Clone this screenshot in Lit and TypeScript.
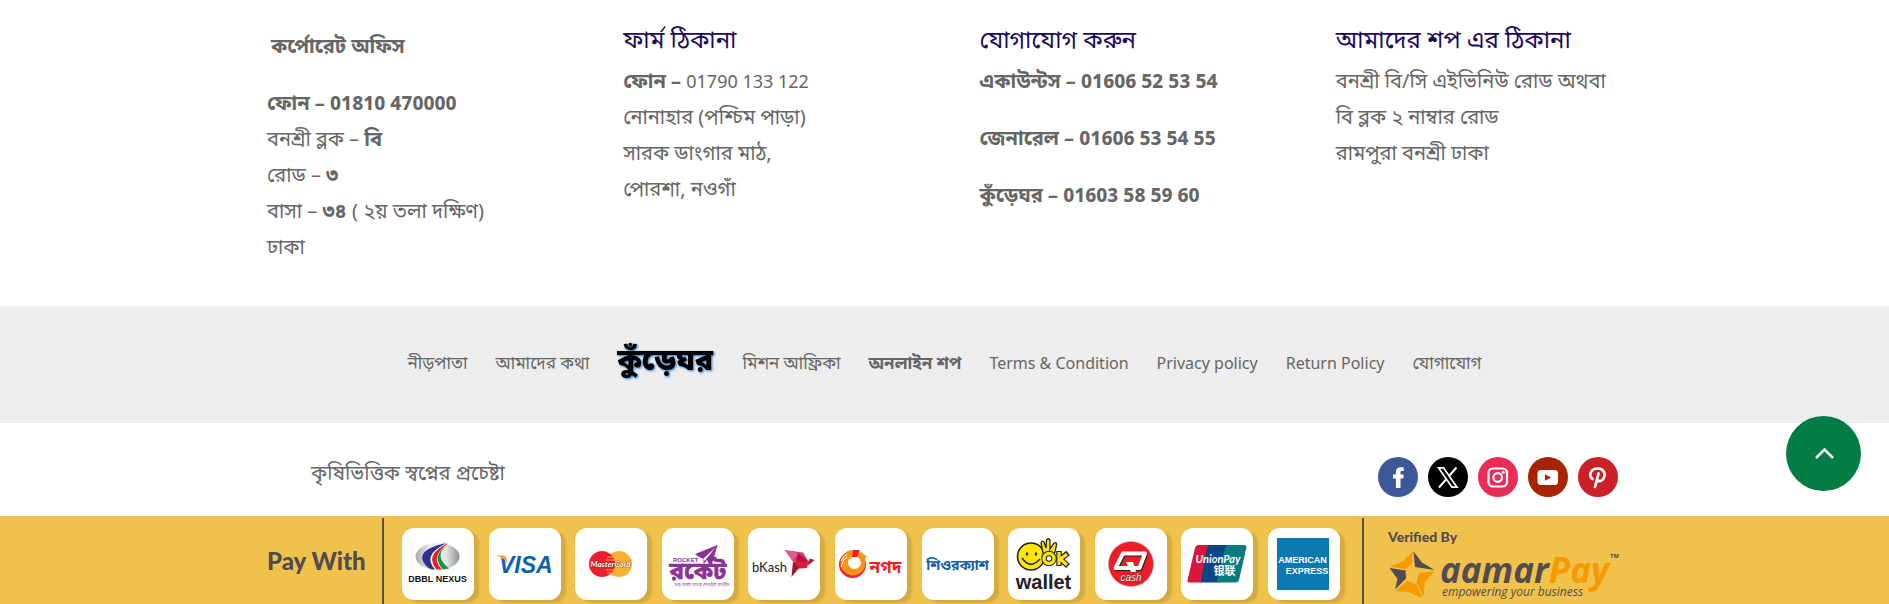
import { LitElement, html, svg, css } from "lit";
import { customElement } from "lit/decorators.js";

const payLogos = [
  {
    name: "DBBL Nexus",
    art: svg`
      <defs>
        <linearGradient id="dbbl" x1="0" x2="1"><stop offset="0" stop-color="#a9a9ac"/><stop offset=".35" stop-color="#f0f0f0"/><stop offset=".7" stop-color="#e4e4e4"/><stop offset="1" stop-color="#8f9092"/></linearGradient>
      </defs>
      <ellipse cx="35.500" cy="28.500" rx="22" ry="13.500" fill="url(#dbbl)"/>
      <path d="M42 15.500Q14 22 22 35Q25 40 30 41.500H34Q20 28 44 15.500Z" fill="#2e3192"/>
      <path d="M44 15.500Q20 27 33 41.500H37Q24 29 45 16Z" fill="#fff"/>
      <path d="M45 15.500Q22 27 34.500 41.500H40Q27 29 46 15.500Z" fill="#ee1c25"/>
      <path d="M45 16.500Q29 28 41 41.500L47 40.500Q31 28 45 16.500Z" fill="#0b9444"/>
      <text x="35.500" y="54" text-anchor="middle" class="ls b" font-size="9" fill="#111">DBBL NEXUS</text>`,
  },
  {
    name: "Visa",
    art: svg`<text x="10" y="45" class="ls b i" font-size="23" fill="#0a5fae">VISA</text>
      <path d="M8 27.500H14Q17 27.500 17.500 30L19 37Q16 30 8 28Z" fill="#f7a03c"/>`,
  },
  {
    name: "MasterCard",
    art: svg`<circle cx="44" cy="36" r="13" fill="#fbb034"/><circle cx="27" cy="36" r="13" fill="#ee1c2e"/>
      <path d="M32 29H39M31 32H40M31 42H39M32 45H37" stroke="#fbb034" stroke-width="1"/>
      <text x="35.500" y="39" text-anchor="middle" class="lato b i" font-size="8" fill="#fff" stroke="#5b1a20" stroke-width=".6" paint-order="stroke">MasterCard</text>`,
  },
  {
    name: "Rocket",
    art: svg`<path d="M33 26L55.600 17L50 36H47L45 32L41.500 36V31L37 29Z" fill="#8a3394"/><path d="M54 19L41.500 30.500L42.500 33Z" fill="#fff"/>
      <text x="11" y="34" class="ls b" font-size="6" fill="#8a3394">ROCKET</text>
      <text x="36" y="51" text-anchor="middle" class="bn b" font-size="24" fill="#8a3394" stroke="#8a3394" stroke-width=".6">রকেট</text>
      <text x="40" y="58" text-anchor="middle" class="bn" font-size="4" fill="#8a3394">ডাচ্-বাংলা ব্যাংক মোবাইল ব্যাংকিং</text>`,
  },
  {
    name: "bKash",
    art: svg`<text x="4" y="44" class="lato" font-size="13" fill="#222">bKash</text>
      <path d="M36.700 22L55 24.500L60.500 33.500L45 33.500Z" fill="#d9386e"/><path d="M36.700 22L50 25L45 33.500Z" fill="#e45c8a"/>
      <path d="M50 25L60.500 33.500L47 38Z" fill="#b8123f"/><path d="M45 33.500L60.500 33.500L59 40L47 41Z" fill="#d81f3c"/>
      <path d="M45 33.500L51 40L43.500 49Z" fill="#a5122c"/><path d="M60 34L62 30.500L66.500 32L62 36L60 37Z" fill="#c01a35"/>`,
  },
  {
    name: "Nagad",
    art: svg`<circle cx="17.500" cy="36.500" r="13.500" fill="#ee2024"/><circle cx="18" cy="35" r="12.500" fill="#f7941d"/>
      <circle cx="19.500" cy="34.500" r="6.500" fill="#fff"/>
      <path d="M6 33Q9 27 14 25M6 39Q7 32 12 29" stroke="#fff" stroke-width="1" fill="none"/>
      <path d="M12 23L18 22L16 31L12 29Z" fill="#f7941d"/><path d="M18 22L25 22L22 29L17 29Z" fill="#ee2024"/><path d="M26 24L32 29L26 33L23 29Z" fill="#f7941d"/>
      <text x="50.500" y="45" text-anchor="middle" class="bn b" font-size="17" fill="#ee2024">নগদ</text>`,
  },
  {
    name: "SureCash",
    art: svg`<text x="35.500" y="42" text-anchor="middle" class="bn b" font-size="14" fill="#1560ab">শিওরক্যাশ</text>`,
  },
  {
    name: "OK Wallet",
    art: svg`<circle cx="23" cy="28.500" r="13.500" fill="#fbe60a" stroke="#222" stroke-width="1.600"/>
      <ellipse cx="19" cy="26" rx="1.200" ry="1.800" fill="#222"/><ellipse cx="28" cy="26" rx="1.200" ry="1.800" fill="#222"/>
      <path d="M14 30Q22 42 32 31" fill="none" stroke="#222" stroke-width="1.400"/>
      <path d="M36 30L33 15Q34 12 36 14L38 20L38.500 12Q40 9.500 42 12L42 21L46 15Q49 14 48.500 17L46 28Z" fill="#fbe60a" stroke="#222" stroke-width="1.300"/>
      <circle cx="41" cy="30.500" r="5" fill="#fff" stroke="#222" stroke-width="5.500"/><circle cx="41" cy="30.500" r="5" fill="none" stroke="#fbe60a" stroke-width="3.500"/>
      <path d="M51 23V38M60 25L52.500 31L60 38" fill="none" stroke="#222" stroke-width="5.500"/><path d="M51 24V37M59 26L52.500 31L59 37" fill="none" stroke="#fbe60a" stroke-width="3.200"/>
      <text x="35.500" y="61" text-anchor="middle" class="ls b" font-size="20" fill="#222">wallet</text>`,
  },
  {
    name: "Q Cash",
    art: svg`<circle cx="36" cy="36" r="22.500" fill="#ee1c25" stroke="#aaa" stroke-width=".6"/>
      <path d="M28 25.500H50L44.500 40H20.500Z" fill="none" stroke="#222" stroke-width="4" stroke-linejoin="round" transform="translate(1 1)"/>
      <path d="M28 25.500H50L44.500 40H20.500Z" fill="none" stroke="#fff" stroke-width="4" stroke-linejoin="round"/><path d="M31 34H38L41 44H36Z" fill="#fff"/>
      <text x="36" y="53" text-anchor="middle" class="ls i" font-size="10" fill="#fff" stroke="#222" stroke-width=".6" paint-order="stroke">cash</text>`,
  },
  {
    name: "UnionPay",
    art: svg`<path d="M17.500 17H30L22 54.500H8Q6 54.500 6.500 52L14 20Q15 17 17.500 17Z" fill="#d9173c"/>
      <path d="M29 17H47L39 54.500H22Q19.500 54.500 20 52L26 20Q27 17 29 17Z" fill="#0a4584"/>
      <path d="M47 17H63Q66 17 65.300 20L58 52Q57 54.500 55 54.500H38Q35.500 54.500 36 52L44 20Q45 17 47 17Z" fill="#067c80"/>
      <text x="37" y="35" text-anchor="middle" class="lato b i" font-size="11" fill="#fff">UnionPay</text>
      <text x="43.500" y="47" text-anchor="middle" class="cjk b" font-size="11" fill="#fff">银联</text>`,
  },
  {
    name: "American Express",
    art: svg`<rect x="9" y="10" width="52" height="52" fill="#0b79b0"/>
      <text x="34.500" y="35" text-anchor="middle" class="ls b" font-size="9" fill="#fff">AMERICAN</text>
      <text x="39" y="46" text-anchor="middle" class="ls b" font-size="9" fill="#fff">EXPRESS</text>`,
  },
];

const socials = [
  { name: "Facebook", cls: "fb", art: svg`<path d="M22.500 31V21.400H25.300L25.700 17.600H22.500V15.600C22.500 14.500 22.900 14 24.200 14H25.700V10.300H22.700C19.600 10.300 17.900 12.200 17.900 14.900V17.600H15V21.400H17.900V31Z" fill="#fff"/>` },
  { name: "X", cls: "x", art: svg`<path d="M10.500 10.800H15.500L29 30.200H24Z" fill="none" stroke="#fff" stroke-width="1.700"/><path d="M28.500 10.500L21.500 18.500M18 22.500L11 30.500" stroke="#fff" stroke-width="1.900"/>` },
  { name: "Instagram", cls: "ig", art: svg`<rect x="10.500" y="11.500" width="18.500" height="18" rx="4.500" fill="none" stroke="#fff" stroke-width="2.200"/><circle cx="19.700" cy="20.500" r="4.300" fill="none" stroke="#fff" stroke-width="2.200"/><circle cx="25.200" cy="15.200" r="1.500" fill="#fff"/>` },
  { name: "YouTube", cls: "yt", art: svg`<rect x="9.500" y="13" width="20.500" height="15" rx="3.500" fill="#fff"/><path d="M17 17.200V23.800L23 20.500Z" fill="#a82400"/>` },
  { name: "Pinterest", cls: "pt", art: svg`<path d="M14.500 22C10.500 19 12 11.500 20 11.500C26 11.500 28 17 25.500 21.500C24 24.500 20.500 25 19 22.500M20.500 16.500L17 30" fill="none" stroke="#fff" stroke-width="2.700" stroke-linecap="round"/>` },
];

@customElement("app-root")
export class AppRoot extends LitElement {
  static styles = css`
    :host {
      display: block;
      background: #fff;
      color: #666;
      font-family: "Noto Sans Bengali", "Open Sans", "Noto Sans", sans-serif;
      font-size: 20px;
      line-height: 36px;
    }
    * { box-sizing: border-box; }
    a { color: inherit; text-decoration: none; }
    h2, p { margin: 0; }
    .wrap { max-width: 1355px; margin: 0 auto; }
    .offices {
      display: grid;
      grid-template-columns: repeat(4, 1fr);
      column-gap: 70px;
      padding: 24px 0 39px;
    }
    .col h2 { color: #1b0a5c; font-size: 24px; line-height: 36px; font-weight: 400; padding-bottom: 5px; }
    .col .lead { padding: 6px 0 21px 4px; }
    .spaced { display: grid; row-gap: 21px; }
    .num { font-size: 18px; line-height: 20px; }
    b .num { font-size: 19px; }
    nav { background: #ededed; padding: 41px 20px; }
    nav ul {
      display: flex; flex-wrap: wrap; justify-content: center; align-items: center;
      column-gap: 28px; margin: 0; padding: 0; list-style: none; font-size: 17px; line-height: 35px;
    }
    .latin { font-size: 16px; line-height: 20px; }
    .brand { display: block; width: 97px; height: 35px; filter: drop-shadow(1px 1px 1px #1a74c4); overflow: visible; }
    .bar { display: flex; justify-content: space-between; align-items: center; padding: 23px 4px 13px 44px; min-height: 93px; }
    .social { display: flex; gap: 10px; margin: 4px 0 0; padding: 0; list-style: none; }
    .social a { display: block; width: 40px; height: 40px; border-radius: 50%; }
    .social svg, .card svg { display: block; width: 100%; height: 100%; }
    .fb { background: #3b5998; }
    .x { background: #000; }
    .ig { background: #ea2c59; }
    .yt { background: #a82400; }
    .pt { background: #cb2027; }
    .top {
      position: fixed; right: 28px; bottom: 113px; width: 75px; height: 75px;
      border: 0; border-radius: 50%; background: #007c45; padding: 0; cursor: pointer;
    }
    .top svg { display: block; width: 100%; height: 100%; }
    .pay { background: #f0c24b; padding-top: 2px; }
    .pay .wrap { display: flex; color: #524c50; }
    .with { font: 900 24px/86px Lato, sans-serif; width: 115px; flex: none; }
    .cards {
      flex: 1; display: flex; justify-content: space-between; gap: 8px;
      margin: 0; padding: 10px 22px 4px 18px; list-style: none;
      border: solid #5b5044; border-width: 0 2px;
    }
    .card { width: 72px; height: 72px; border-radius: 12px; background: #fff; box-shadow: 5px 3px 2px #d3ab42; }
    .verified { flex: none; width: 258px; padding: 9px 0 0 24px; font: 900 14px/20px Lato, sans-serif; }
    .verified svg { display: block; width: 234px; height: 55px; font-weight: 400; overflow: visible; }
    .ls { font-family: "Liberation Sans", sans-serif; }
    .lato { font-family: Lato, sans-serif; }
    .os { font-family: "Open Sans", sans-serif; }
    .bn { font-family: "Noto Sans Bengali", sans-serif; }
    .cjk { font-family: "Noto Sans CJK SC", sans-serif; }
    .b { font-weight: 700; }
    .i { font-style: italic; }
  `;

  render() {
    return html`
      <footer>
        <div class="wrap offices">
          <section class="col">
            <p class="lead"><b>কর্পোরেট অফিস</b></p>
            <p><b>ফোন – <span class="num">01810 470000</span></b></p>
            <p>বনশ্রী ব্লক – <b>বি</b></p>
            <p>রোড – <b>৩</b></p>
            <p>বাসা – <b>৩৪</b> ( ২য় তলা দক্ষিণ)</p>
            <p>ঢাকা</p>
          </section>
          <section class="col">
            <h2>ফার্ম ঠিকানা</h2>
            <p><b>ফোন –</b> <span class="num">01790 133 122</span></p>
            <p>নোনাহার (পশ্চিম পাড়া)</p>
            <p>সারক ডাংগার মাঠ,</p>
            <p>পোরশা, নওগাঁ</p>
          </section>
          <section class="col">
            <h2>যোগাযোগ করুন</h2>
            <div class="spaced">
              <p><b>একাউন্টস – <span class="num">01606 52 53 54</span></b></p>
              <p><b>জেনারেল – <span class="num">01606 53 54 55</span></b></p>
              <p><b>কুঁড়েঘর – <span class="num">01603 58 59 60</span></b></p>
            </div>
          </section>
          <section class="col">
            <h2>আমাদের শপ এর ঠিকানা</h2>
            <p>বনশ্রী বি/সি এইভিনিউ রোড অথবা</p>
            <p>বি ব্লক ২ নাম্বার রোড</p>
            <p>রামপুরা বনশ্রী ঢাকা</p>
          </section>
        </div>
        <nav>
          <ul>
            <li><a href="#home">নীড়পাতা</a></li>
            <li><a href="#about">আমাদের কথা</a></li>
            <li><a href="#brand" aria-label="কুঁড়েঘর"><svg class="brand" viewBox="0 0 97 35">
              <text x="48" y="23" text-anchor="middle" class="bn" font-weight="900" font-size="30" fill="#000">কুঁড়েঘর</text>
            </svg></a></li>
            <li><a href="#mission">মিশন আফ্রিকা</a></li>
            <li><a href="#shop"><b>অনলাইন শপ</b></a></li>
            <li><a class="latin" href="#terms">Terms &amp; Condition</a></li>
            <li><a class="latin" href="#privacy">Privacy policy</a></li>
            <li><a class="latin" href="#returns">Return Policy</a></li>
            <li><a href="#contact">যোগাযোগ</a></li>
          </ul>
        </nav>
        <div class="wrap bar">
          <p>কৃষিভিত্তিক স্বপ্নের প্রচেষ্টা</p>
          <ul class="social">
            ${socials.map((s) => html`<li><a class=${s.cls} href="#${s.cls}" aria-label=${s.name}><svg viewBox="0 0 40 40">${s.art}</svg></a></li>`)}
          </ul>
        </div>
        <div class="pay">
          <div class="wrap">
            <div class="with">Pay With</div>
            <ul class="cards">
              ${payLogos.map((l) => html`<li class="card"><svg viewBox="0 0 72 72" role="img" aria-label=${l.name}>${l.art}</svg></li>`)}
            </ul>
            <div class="verified">
              Verified By
              <svg viewBox="0 0 234 55" role="img" aria-label="aamarPay">
                <path d="M24.500 4.500L24 17L17.500 22L1.500 19.500L15 14.500Z" fill="#f79a00"/>
                <path d="M25.500 4.500L34 15.500L46.500 23L27 20Z" fill="#524c50"/>
                <path d="M1.500 21L17.500 23.500L18 31.500L7 42.500L9.500 32Z" fill="#524c50"/>
                <path d="M46.500 24.500L37 35L35.500 50L28.500 36L31 26Z" fill="#f79a00"/>
                <path d="M7 44L19.500 34L28 37L34.500 51L20 45Z" fill="#f79a00"/>
                <text x="52" y="36" class="os b i" font-size="35" fill="#524c50">aamar<tspan fill="#f79a00">Pay</tspan></text>
                <text x="54" y="49" class="os i" font-size="12" fill="#524c50">empowering your business</text>
                <text x="222" y="11" class="ls b" font-size="6" fill="#524c50">TM</text>
              </svg>
            </div>
          </div>
        </div>
        <button class="top" aria-label="Back to top">
          <svg viewBox="0 0 75 75"><path d="M30 42L38.500 33.500L47 42" fill="none" stroke="#fff" stroke-width="2.500"/></svg>
        </button>
      </footer>
    `;
  }
}
